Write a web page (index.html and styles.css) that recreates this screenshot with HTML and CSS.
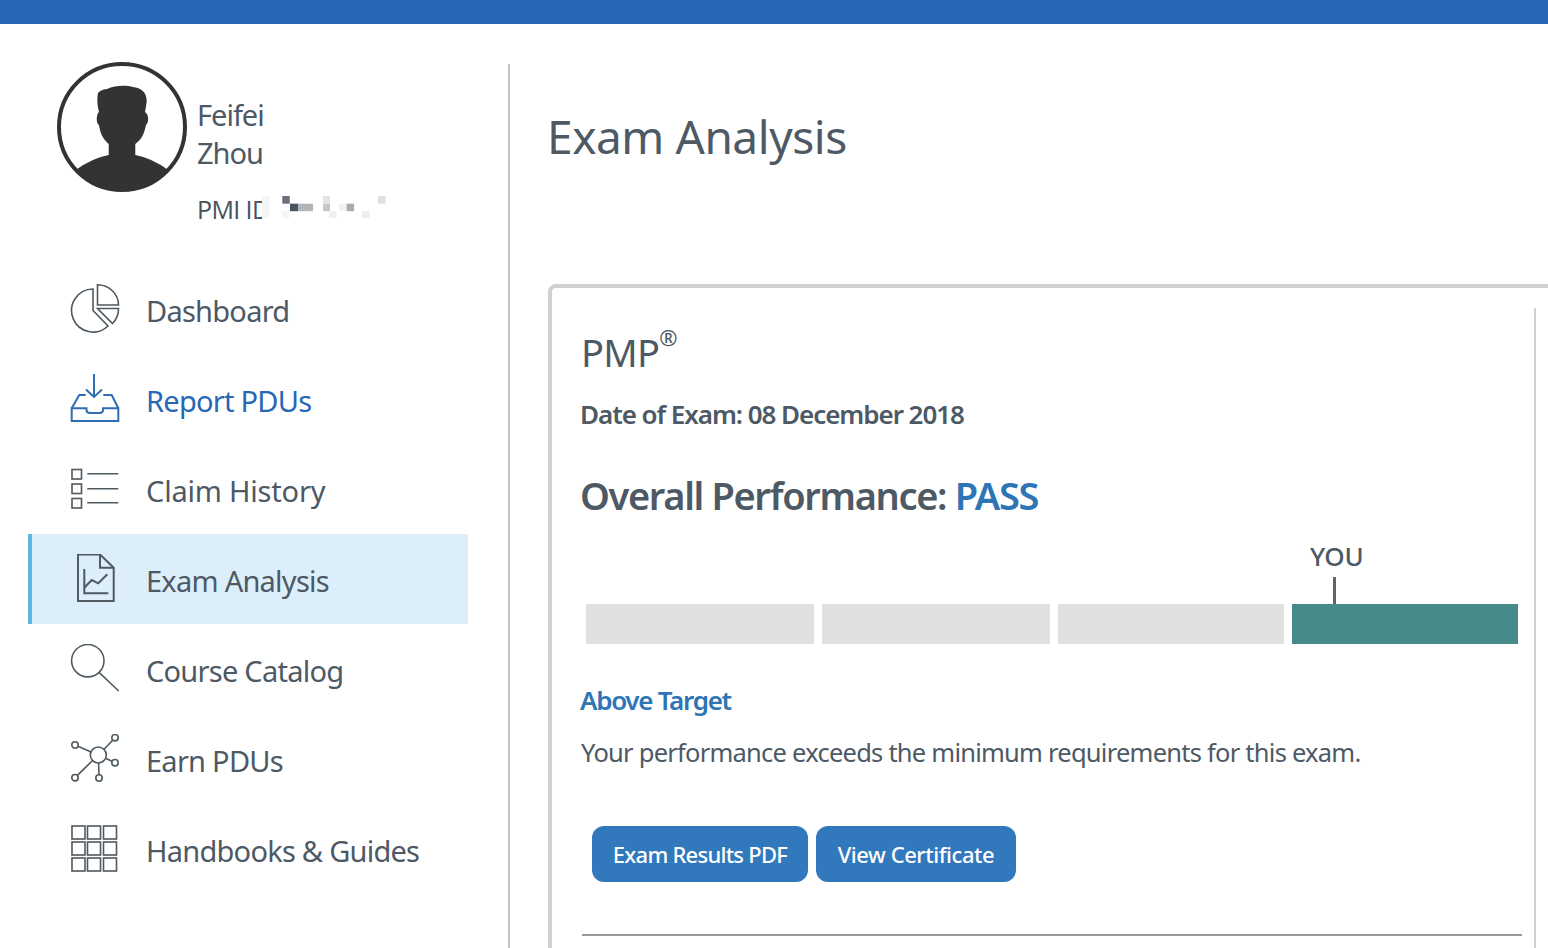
FILE: index.html
```html
<!DOCTYPE html>
<html lang="en">
<head>
<meta charset="utf-8">
<title>Exam Analysis</title>
<link rel="stylesheet" href="styles.css">
</head>
<body>
<header class="topbar"></header>
<div class="layout">
  <aside class="sidebar">
    <div class="profile">
      <svg class="avatar" viewBox="0 0 130 130" width="130" height="130">
        <circle cx="65" cy="65" r="63" fill="#fff" stroke="#333" stroke-width="4"/>
        <path fill="#333" d="M51.7 93V82C45 76 43 70 42 63C39 62 39 52 42 50C40 43 40 36 41 31C44 28 47 27 50 27C58 23 70 23 76 25C84 26 90 30 89.7 40C89 44 88.5 48 88 50C92 52 92 61 89 63C87 72 85 77 78.3 82V93Q95 96 112 108.5A64 64 0 0 1 18 108.5Q35 96 51.7 93Z"/>
      </svg>
      <div class="name">Feifei<br>Zhou</div>
      <div class="pmi">PMI ID
        <svg class="pixels" viewBox="0 0 130 28" width="130" height="28">
          <rect width="130" height="28" fill="#fff"/>
          <rect x="0" y="2" width="7.5" height="22" fill="#f5f5f5"/>
          <rect x="20.3" y="2" width="7.5" height="7.7" fill="#6a737d"/>
          <rect x="28" y="9.7" width="8" height="7.5" fill="#4a5561"/>
          <rect x="36" y="9.7" width="15" height="7.5" fill="#b0b5ba"/>
          <rect x="61" y="2" width="7" height="7.7" fill="#e2e4e6"/>
          <rect x="61" y="9.7" width="7" height="7.5" fill="#c5c9cc"/>
          <rect x="77" y="9.7" width="7.5" height="7.5" fill="#f2f2f2"/>
          <rect x="84.6" y="9.7" width="7.5" height="7.5" fill="#a9adb1"/>
          <rect x="116" y="2" width="7.5" height="7.7" fill="#e0e0e0"/>
          <rect x="20" y="17" width="7.5" height="7" fill="#f5f5f5"/>
          <rect x="67" y="17" width="7.5" height="7" fill="#f0f0f0"/>
          <rect x="100" y="17" width="7.5" height="7" fill="#eee"/>
        </svg>
      </div>
    </div>
    <nav class="nav">
      <a class="nav-item">
        <svg class="icon" viewBox="0 0 50 50" width="50" height="50"><path d="M23 5V26.5L38 42A21.5 21.5 0 1 1 23 5Z"/><path d="M27.5 .8V21H48.5A21 20.2 0 0 0 27.5 .8Z"/><path d="M27.5 24.5H48.5A21 21 0 0 1 42.5 39.5Z"/></svg>
        <span>Dashboard</span>
      </a>
      <a class="nav-item nav-link">
        <svg class="icon" viewBox="0 0 50 50" width="50" height="50"><path d="M24 0V23.5M16 15.5L24 23L32 15.5"/><path d="M1.7 34.3H16.5V36Q16.5 39 20 39H29.5Q33 39 33 36V34.3H48.3V47H1.7Z"/><path d="M15.7 21H9.3L1.7 34.3M33.3 21H41.7L48.3 34.3"/></svg>
        <span>Report PDUs</span>
      </a>
      <a class="nav-item">
        <svg class="icon" viewBox="0 0 50 50" width="50" height="50"><rect x="2" y="5.5" width="9.5" height="9.5"/><rect x="2" y="20" width="9.5" height="9.5"/><rect x="2" y="34.5" width="9.5" height="9.5"/><path d="M17.3 9.7H48.3M17.3 24.7H48.3M17.3 38.7H48.3"/></svg>
        <span class="wide">Claim History</span>
      </a>
      <a class="nav-item active">
        <svg class="icon" viewBox="0 0 50 50" width="50" height="50"><path d="M8 .5H30L43.7 13.7V47H8Z"/><path d="M30 .5V13.7H43.7"/><path d="M14.3 15V39.3H38.3"/><path d="M14.3 33.7L21.7 26L28.3 29.3L37.3 20.3"/></svg>
        <span>Exam Analysis</span>
      </a>
      <a class="nav-item">
        <svg class="icon" viewBox="0 0 50 50" width="50" height="50"><circle cx="17.8" cy="16.7" r="16.2"/><path d="M29.3 28.7L48.7 47"/></svg>
        <span>Course Catalog</span>
      </a>
      <a class="nav-item">
        <svg class="icon" viewBox="0 0 50 50" width="50" height="50"><circle cx="28.3" cy="21" r="8"/><circle cx="5" cy="11" r="3.2"/><circle cx="45" cy="3.7" r="3.2"/><circle cx="45" cy="28.7" r="3.2"/><circle cx="5" cy="43.7" r="3.2"/><circle cx="29" cy="44" r="3.2"/><path d="M8 12.3L21 17.9M42.7 6.2L34 15.2M36 24.5L42 27.3M7.4 41.4L22.5 26.5M28.6 29L29 40.8"/></svg>
        <span>Earn PDUs</span>
      </a>
      <a class="nav-item">
        <svg class="icon" viewBox="0 0 50 50" width="50" height="50"><rect x="2" y="2" width="13" height="13"/><rect x="17.5" y="2" width="13" height="13"/><rect x="33.5" y="2" width="13" height="13"/><rect x="2" y="18" width="13" height="13"/><rect x="17.5" y="18" width="13" height="13"/><rect x="33.5" y="18" width="13" height="13"/><rect x="2" y="34" width="13" height="13"/><rect x="17.5" y="34" width="13" height="13"/><rect x="33.5" y="34" width="13" height="13"/></svg>
        <span>Handbooks &amp; Guides</span>
      </a>
    </nav>
  </aside>
  <main class="main">
    <h1 class="title">Exam Analysis</h1>
    <section class="card">
      <div class="card-inner">
        <h2 class="exam">PMP<sup class="reg">®</sup></h2>
        <p class="date">Date of Exam: 08 December 2018</p>
        <p class="overall">Overall Performance: <span class="pass">PASS</span></p>
        <div class="you">YOU</div>
        <div class="tick"></div>
        <div class="bars">
          <div class="bar"></div>
          <div class="bar"></div>
          <div class="bar"></div>
          <div class="bar bar-on"></div>
        </div>
        <h3 class="target">Above Target</h3>
        <p class="desc">Your performance exceeds the minimum requirements for this exam.</p>
        <div class="buttons">
          <a class="btn btn-pdf">Exam Results PDF</a>
          <a class="btn btn-cert">View Certificate</a>
        </div>
        <hr class="rule">
      </div>
    </section>
  </main>
</div>
</body>
</html>
```
FILE: styles.css
```css
* { box-sizing: border-box; }
html, body { margin: 0; height: 948px; overflow: hidden; background: #fff; }
body { font-family: "Noto Sans", "Open Sans", sans-serif; color: #4d5964; }

.topbar { height: 24px; background: #2566b5; }
.layout { display: flex; align-items: flex-start; }

.sidebar { width: 510px; flex: none; margin-top: 40px; height: 884px; border-right: 2px solid #c2c6ca; padding-left: 28px; }

.profile { position: relative; height: 202px; padding-left: 29px; display: grid; grid-template-columns: 130px 1fr; column-gap: 10px; grid-template-rows: 130px auto; margin-top: -2px; }
.avatar { display: block; }
.name { font-size: 29px; line-height: 38px; letter-spacing: -1px; align-self: center; padding-top: 13px; }
.pmi { grid-column: 2; font-family: "Open Sans", "Noto Sans", sans-serif; font-weight: 500; font-size: 25px; line-height: 34px; letter-spacing: -.6px; position: relative; color: #46525d; }
.pixels { position: absolute; left: 65px; top: 2px; }

.nav { width: 440px; }
.nav-item { display: flex; align-items: center; height: 90px; padding-left: 42px; column-gap: 27px; font-size: 29px; letter-spacing: -.75px; color: #4d5964; }
.nav-item span { margin-left: -1px; padding-top: 2px; }
.nav-item .wide { letter-spacing: -.2px; }
.nav-link { color: #2767b5; }
.active { background: #dceefa; border-left: 4px solid #5fb5e0; padding-left: 38px; }
.icon { flex: none; fill: none; stroke: #4f5960; stroke-width: 1.6; }
.nav-link .icon { stroke: #2e6db4; stroke-width: 2; }
.active .icon { stroke-width: 2; }

.main { flex: none; width: 1038px; padding-left: 38px; margin-top: 40px; }
.title { margin: 0 0 0 -1px; height: 220px; font-size: 46px; line-height: 64px; padding-top: 40px; font-weight: 400; letter-spacing: -.45px; color: #4d5964; }

.card { width: 1100px; height: 700px; border: solid #d0d0d0; border-width: 4px 0 0 4px; border-top-left-radius: 8px; padding-top: 20px; }
.card-inner { width: 984px; height: 680px; border-right: 2px solid #d0d0d0; padding-left: 29px; }

.exam { margin: 0; height: 88px; font-size: 38px; line-height: 52px; font-weight: 400; letter-spacing: -.7px; padding-top: 18px; }
.reg { font-size: 22px; line-height: 0; vertical-align: 21px; }
.date { margin: 0 0 0 -1px; height: 73px; font-size: 26px; line-height: 36px; font-weight: 600; letter-spacing: -1.05px; }
.overall { margin: 0 0 0 -1px; height: 72px; font-size: 38px; line-height: 52px; font-weight: 600; letter-spacing: -1.35px; }
.pass { color: #2e75b5; }

.you { margin-left: 729px; height: 36px; font-size: 26px; line-height: 30px; letter-spacing: -.3px; font-weight: 500; }
.tick { margin-left: 752px; width: 3px; height: 27px; background: #5a6672; }
.bars { display: grid; grid-template-columns: 228px 228px 226px 226px; column-gap: 8px; margin-left: 5px; }
.bar { height: 40px; background: #e0e0e0; }
.bar-on { background: #468b8a; }

.target { margin: 38px 0 0 -1px; height: 36px; font-size: 26px; line-height: 36px; font-weight: 600; letter-spacing: -1.3px; color: #2e75b5; }
.desc { margin: 16px 0 0; height: 36px; font-size: 25.5px; line-height: 36px; letter-spacing: -.76px; }

.buttons { display: flex; column-gap: 8px; margin: 56px 0 0 11px; }
.btn { display: flex; align-items: center; justify-content: center; height: 56px; border-radius: 12px; background: #3178bd; color: #fff; font-size: 22px; font-weight: 500; }
.btn-pdf { width: 216px; letter-spacing: -.75px; }
.btn-cert { width: 200px; letter-spacing: -.45px; }

.rule { margin: 52px 0 0 1px; width: 940px; height: 2px; border: 0; background: #999; }
```
